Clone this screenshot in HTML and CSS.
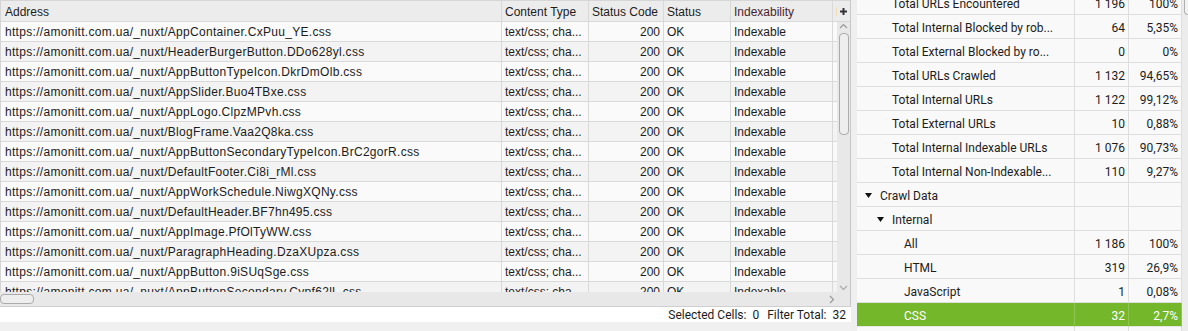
FILE: index.html
```html
<!DOCTYPE html>
<html lang="en">
<head>
    <meta charset="UTF-8">
    <title>Crawl Overview</title>
    <link rel="stylesheet" href="styles.css">
</head>
<body>
<div class="app">
    <div class="left">
        <div class="table-area">
            <div class="viewport">
                <div class="row head">
                    <div class="cell">Address</div>
                    <div class="cell">Content Type</div>
                    <div class="cell">Status Code</div>
                    <div class="cell">Status</div>
                    <div class="cell idx">Indexability</div>
                    <div class="cell idx-status">Indexability Status</div>
                </div>
                <div class="row"><div class="cell url">https://amonitt.com.ua/_nuxt/AppContainer.CxPuu_YE.css</div><div class="cell">text/css; cha...</div><div class="cell num">200</div><div class="cell">OK</div><div class="cell">Indexable</div><div class="cell"></div></div>
                <div class="row"><div class="cell url">https://amonitt.com.ua/_nuxt/HeaderBurgerButton.DDo628yl.css</div><div class="cell">text/css; cha...</div><div class="cell num">200</div><div class="cell">OK</div><div class="cell">Indexable</div><div class="cell"></div></div>
                <div class="row"><div class="cell url">https://amonitt.com.ua/_nuxt/AppButtonTypeIcon.DkrDmOlb.css</div><div class="cell">text/css; cha...</div><div class="cell num">200</div><div class="cell">OK</div><div class="cell">Indexable</div><div class="cell"></div></div>
                <div class="row"><div class="cell url">https://amonitt.com.ua/_nuxt/AppSlider.Buo4TBxe.css</div><div class="cell">text/css; cha...</div><div class="cell num">200</div><div class="cell">OK</div><div class="cell">Indexable</div><div class="cell"></div></div>
                <div class="row"><div class="cell url">https://amonitt.com.ua/_nuxt/AppLogo.ClpzMPvh.css</div><div class="cell">text/css; cha...</div><div class="cell num">200</div><div class="cell">OK</div><div class="cell">Indexable</div><div class="cell"></div></div>
                <div class="row"><div class="cell url">https://amonitt.com.ua/_nuxt/BlogFrame.Vaa2Q8ka.css</div><div class="cell">text/css; cha...</div><div class="cell num">200</div><div class="cell">OK</div><div class="cell">Indexable</div><div class="cell"></div></div>
                <div class="row"><div class="cell url">https://amonitt.com.ua/_nuxt/AppButtonSecondaryTypeIcon.BrC2gorR.css</div><div class="cell">text/css; cha...</div><div class="cell num">200</div><div class="cell">OK</div><div class="cell">Indexable</div><div class="cell"></div></div>
                <div class="row"><div class="cell url">https://amonitt.com.ua/_nuxt/DefaultFooter.Ci8i_rMl.css</div><div class="cell">text/css; cha...</div><div class="cell num">200</div><div class="cell">OK</div><div class="cell">Indexable</div><div class="cell"></div></div>
                <div class="row"><div class="cell url">https://amonitt.com.ua/_nuxt/AppWorkSchedule.NiwgXQNy.css</div><div class="cell">text/css; cha...</div><div class="cell num">200</div><div class="cell">OK</div><div class="cell">Indexable</div><div class="cell"></div></div>
                <div class="row"><div class="cell url">https://amonitt.com.ua/_nuxt/DefaultHeader.BF7hn495.css</div><div class="cell">text/css; cha...</div><div class="cell num">200</div><div class="cell">OK</div><div class="cell">Indexable</div><div class="cell"></div></div>
                <div class="row"><div class="cell url">https://amonitt.com.ua/_nuxt/AppImage.PfOlTyWW.css</div><div class="cell">text/css; cha...</div><div class="cell num">200</div><div class="cell">OK</div><div class="cell">Indexable</div><div class="cell"></div></div>
                <div class="row"><div class="cell url">https://amonitt.com.ua/_nuxt/ParagraphHeading.DzaXUpza.css</div><div class="cell">text/css; cha...</div><div class="cell num">200</div><div class="cell">OK</div><div class="cell">Indexable</div><div class="cell"></div></div>
                <div class="row"><div class="cell url">https://amonitt.com.ua/_nuxt/AppButton.9iSUqSge.css</div><div class="cell">text/css; cha...</div><div class="cell num">200</div><div class="cell">OK</div><div class="cell">Indexable</div><div class="cell"></div></div>
                <div class="row"><div class="cell url">https://amonitt.com.ua/_nuxt/AppButtonSecondary.Cypf62lL.css</div><div class="cell">text/css; cha...</div><div class="cell num">200</div><div class="cell">OK</div><div class="cell">Indexable</div><div class="cell"></div></div>
            </div>

            <div class="vscroll">
                <div class="add-col">
                    <svg width="9" height="9" viewBox="0 0 9 9"><path d="M4.5 1v7M1 4.5h7" stroke="#333" stroke-width="2"/></svg>
                </div>
                <div class="vtrack">
                    <svg class="arrow" width="9" height="6" viewBox="0 0 9 6"><path d="M1 5l3.5-3.5L8 5" fill="none" stroke="#999" stroke-width="1.2"/></svg>
                    <div class="vthumb"></div>
                    <svg class="arrow down" width="9" height="6" viewBox="0 0 9 6"><path d="M1 1l3.5 3.5L8 1" fill="none" stroke="#aaa" stroke-width="1.2"/></svg>
                </div>
            </div>

            <div class="hscroll">
                <div class="hthumb"></div>
                <svg width="6" height="9" viewBox="0 0 6 9"><path d="M1 1l3.5 3.5L1 8" fill="none" stroke="#999" stroke-width="1.2"/></svg>
            </div>
            <div class="corner"></div>
        </div>

        <div class="status">
            <span>Selected Cells:</span><span>0</span>
            <span class="gap">Filter Total:</span><span>32</span>
        </div>
    </div>

    <div class="splitter"></div>

    <div class="right">
        <div class="tree">
            <div class="trow"><div class="label lv1">Total URLs Encountered</div><div class="val">1 196</div><div class="val">100%</div></div>
            <div class="trow"><div class="label lv1">Total Internal Blocked by rob...</div><div class="val">64</div><div class="val">5,35%</div></div>
            <div class="trow"><div class="label lv1">Total External Blocked by ro...</div><div class="val">0</div><div class="val">0%</div></div>
            <div class="trow"><div class="label lv1">Total URLs Crawled</div><div class="val">1 132</div><div class="val">94,65%</div></div>
            <div class="trow"><div class="label lv1">Total Internal URLs</div><div class="val">1 122</div><div class="val">99,12%</div></div>
            <div class="trow"><div class="label lv1">Total External URLs</div><div class="val">10</div><div class="val">0,88%</div></div>
            <div class="trow"><div class="label lv1">Total Internal Indexable URLs</div><div class="val">1 076</div><div class="val">90,73%</div></div>
            <div class="trow"><div class="label lv1">Total Internal Non-Indexable...</div><div class="val">110</div><div class="val">9,27%</div></div>
            <div class="trow"><div class="label lv0"><svg class="tri" width="7" height="5" viewBox="0 0 7 5"><path d="M0 0h7L3.5 5z" fill="#111"/></svg>Crawl Data</div><div class="val"></div><div class="val"></div></div>
            <div class="trow"><div class="label lv1"><svg class="tri" width="7" height="5" viewBox="0 0 7 5"><path d="M0 0h7L3.5 5z" fill="#111"/></svg>Internal</div><div class="val"></div><div class="val"></div></div>
            <div class="trow"><div class="label lv2">All</div><div class="val">1 186</div><div class="val">100%</div></div>
            <div class="trow"><div class="label lv2">HTML</div><div class="val">319</div><div class="val">26,9%</div></div>
            <div class="trow"><div class="label lv2">JavaScript</div><div class="val">1</div><div class="val">0,08%</div></div>
            <div class="trow selected"><div class="label lv2">CSS</div><div class="val">32</div><div class="val">2,7%</div></div>
            <div class="trow"><div class="label lv2">Images</div><div class="val"></div><div class="val"></div></div>
        </div>
        <div class="rscroll"><div class="rthumb"></div></div>
    </div>
</div>
</body>
</html>
```

FILE: styles.css
```css
body {
    margin: 0;
    background-color: #f0f0f0;
    font-family: Roboto, "Liberation Sans", Arial, sans-serif;
    font-size: 12px;
    color: #1c1c1c;
    overflow: hidden;
}
.app {
    display: flex;
    width: 1188px;
    height: 331px;
    overflow: hidden;
}

/* left: url table */
.left {
    width: 851px;
    flex: none;
    display: flex;
    flex-direction: column;
}
.table-area {
    display: grid;
    grid-template-columns: 837px 14px;
    grid-template-rows: 292px 14px;
}
.viewport {
    overflow: hidden;
    border-left: 1px solid #d4d4d4;
    box-sizing: border-box;
    font-family: "Liberation Sans", Arial, sans-serif;
    font-size: 12px;
}
.row {
    display: grid;
    grid-template-columns: 501px 87px 75px 67px 102px 120px;
    height: 20px;
    line-height: 21px;
    background-color: #fafafa;
}
.row:nth-child(odd) {
    background-color: #f3f3f3;
}
.row.head {
    height: 22px;
    line-height: 23px;
    background-color: #ececec;
    border-top: 1px solid #d6d6d6;
    box-sizing: border-box;
}
.cell {
    padding: 0 3px;
    border-right: 1px solid #d9d9d9;
    border-bottom: 1px solid #d9d9d9;
    white-space: nowrap;
    overflow: hidden;
}
.row .cell:first-child {
    padding-left: 4px;
}
.cell.url {
    letter-spacing: 0.3px;
}
.cell.num {
    text-align: right;
}
.cell.idx {
    color: #4a1f2e;
}
.cell.idx-status {
    color: #8a1a3a;
}

.vscroll {
    display: flex;
    flex-direction: column;
    border-right: 1px solid #c9c9c9;
}
.add-col {
    height: 22px;
    box-sizing: border-box;
    background-color: #ececec;
    border-top: 1px solid #d6d6d6;
    border-bottom: 1px solid #d6d6d6;
    display: flex;
    align-items: center;
    justify-content: center;
}
.vtrack {
    flex: 1;
    background-color: #e8e8e8;
    display: flex;
    flex-direction: column;
    align-items: center;
    padding-top: 1px;
}
.vthumb {
    width: 10px;
    height: 102px;
    margin-top: 4px;
    box-sizing: border-box;
    border: 1px solid #ababab;
    border-radius: 4px;
    background-color: #eeeeee;
}
.arrow.down {
    margin-top: auto;
    margin-bottom: 1px;
}
.hscroll {
    background-color: #e8e8e8;
    display: flex;
    align-items: center;
    justify-content: space-between;
    padding-right: 2px;
}
.hthumb {
    width: 34px;
    height: 10px;
    box-sizing: border-box;
    border: 1px solid #ababab;
    border-radius: 4px;
    background-color: #eeeeee;
}
.corner {
    background-color: #e8e8e8;
    border-right: 1px solid #c9c9c9;
}
.status {
    height: 15px;
    background-color: #fff;
    border-top: 1px solid #cfcfcf;
    display: flex;
    justify-content: flex-end;
    align-items: center;
    gap: 6px;
    padding-right: 5px;
}
.status .gap {
    margin-left: 2px;
}

.splitter {
    width: 6px;
    flex: none;
    background-color: #efefef;
}

/* right: overview tree */
.right {
    flex: 1;
    display: flex;
    background-color: #fff;
    overflow: hidden;
}
.tree {
    width: 325px;
    flex: none;
    margin-top: -9px;
}
.trow {
    display: grid;
    grid-template-columns: 218px 54px 53px;
    height: 24px;
    line-height: 22px;
    background-color: #f9f9f9;
}
.trow > div {
    padding-top: 2px;
    box-sizing: border-box;
    border-right: 1px solid #dedede;
    border-bottom: 1px solid #dedede;
    white-space: nowrap;
    overflow: hidden;
}
.label {
    display: flex;
    align-items: center;
}
.lv0 { padding-left: 23px; }
.lv1 { padding-left: 35px; }
.lv2 { padding-left: 47px; }
.tri {
    margin-left: -15px;
    margin-right: 8px;
}
.val {
    text-align: right;
    padding-right: 3px;
}
.trow.selected {
    background-color: #74b72b;
    color: #fff;
}
.trow.selected > div {
    border-right-color: #8fc652;
    border-bottom-color: #e6e6e6;
}
.rscroll {
    flex: 1;
    background-color: #ececec;
    padding-left: 2px;
}
.rthumb {
    width: 10px;
    height: 15px;
    box-sizing: border-box;
    border: 1px solid #b0b0b0;
    border-top: none;
    border-radius: 0 0 4px 4px;
    background-color: #f2f2f2;
}
```
